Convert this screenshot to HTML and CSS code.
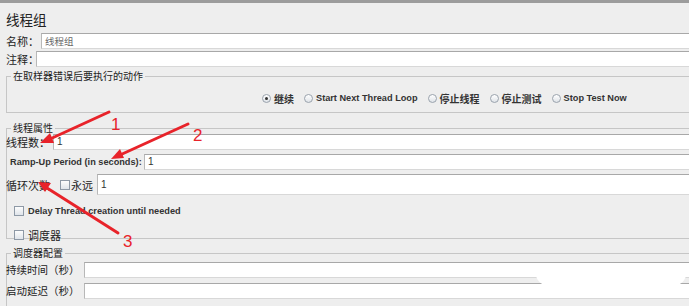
FILE: index.html
```
<!DOCTYPE html>
<html lang="zh-CN">
<head>
    <meta charset="UTF-8">
    <title>线程组</title>
    <link rel="stylesheet" href="styles.css">
</head>
<body>
    <div class="topbar"></div>

    <div class="page">
        <h1 class="title">线程组</h1>

        <div class="row row-name">
            <label class="lbl">名称：</label>
            <div class="field name-field">线程组</div>
        </div>
        <div class="row row-note">
            <label class="lbl">注释：</label>
            <div class="field"></div>
        </div>

        <fieldset class="group group-action">
            <legend>在取样器错误后要执行的动作</legend>
            <div class="radios">
                <span class="radio checked"></span><span class="opt cn">继续</span>
                <span class="radio"></span><span class="opt en">Start Next Thread Loop</span>
                <span class="radio"></span><span class="opt cn">停止线程</span>
                <span class="radio"></span><span class="opt cn">停止测试</span>
                <span class="radio"></span><span class="opt en">Stop Test Now</span>
            </div>
        </fieldset>

        <fieldset class="group group-thread">
            <legend>线程属性</legend>
            <div class="row row-count">
                <label class="lbl">线程数：</label>
                <div class="field">1</div>
            </div>
            <div class="row row-ramp">
                <label class="en">Ramp-Up Period (in seconds):</label>
                <div class="field">1</div>
            </div>
            <div class="row row-loop">
                <label class="lbl loop-lbl">循环次数</label>
                <span class="check"></span>
                <span class="forever">永远</span>
                <div class="field">1</div>
            </div>
            <div class="row row-check">
                <span class="check"></span>
                <span class="en">Delay Thread creation until needed</span>
            </div>
            <div class="row row-check row-sched">
                <span class="check"></span>
                <span class="lbl">调度器</span>
            </div>
        </fieldset>

        <fieldset class="group group-sched">
            <legend>调度器配置</legend>
            <div class="row row-dur">
                <label class="lbl">持续时间（秒）</label>
                <div class="field"></div>
            </div>
            <div class="row row-delay">
                <label class="lbl">启动延迟（秒）</label>
                <div class="field"></div>
            </div>
        </fieldset>
    </div>

    <!-- red annotation arrows over the form -->
    <svg class="marks" width="689" height="306" viewBox="0 0 689 306">
        <g stroke="#e8232a" stroke-width="3" stroke-linecap="round" fill="none">
            <line x1="109" y1="112" x2="50" y2="139"/>
            <line x1="188" y1="124" x2="120" y2="155"/>
            <line x1="118" y1="233" x2="47" y2="188"/>
        </g>
        <g fill="#e8232a">
            <polygon points="40,143 50,133 54,143"/>
            <polygon points="111,159 120,149 124,158"/>
            <polygon points="38,182 51,183 45,192"/>
        </g>
        <g class="nums" fill="#e8232a">
            <text x="111" y="130">1</text>
            <text x="193" y="141">2</text>
            <text x="123" y="247">3</text>
        </g>
    </svg>
    <div class="blot"></div>
</body>
</html>
```

FILE: styles.css
```
* {
    box-sizing: border-box;
}
body {
    margin: 0;
    width: 689px;
    height: 306px;
    overflow: hidden;
    background: #eeeeee;
    color: #222;
    font-family: 'Noto Sans CJK SC', 'Liberation Sans', sans-serif;
    font-size: 11px;
    position: relative;
}

.topbar { height: 3px; background: #9c9c9c; }

.page { padding: 0 0 0 6px; }

.title {
    margin: 6px 0 4px 0; font-size: 13.5px; font-weight: 400; line-height: 20px; color: #222;
}

.row { display: flex; align-items: center; height: 16px; margin-bottom: 2px; }
.lbl { white-space: nowrap; line-height: 16px; }
.en { font-family: 'Liberation Sans', sans-serif; font-size: 9.2px; font-weight: 700; color: #333; white-space: nowrap; }

.field {
    flex: 1; height: 16px; background: #fff;
    border-top: 1px solid #a8a8a8; border-left: 1px solid #b8b8b8; border-bottom: 1px solid #d8d8d8;
    font-family: 'Liberation Sans', sans-serif; font-size: 10px; line-height: 14px;
    padding-left: 3px; color: #333;
}
.name-field { font-family: 'Noto Sans CJK SC', sans-serif; font-size: 9.5px; color: #666; }
.row-name .lbl { width: 35px; }
.row-note .lbl { width: 30px; }

.group {
    margin: 0; border: 1px solid #c6c6c6; border-right: none;
    padding: 0;
}
.group legend { font-size: 10px; line-height: 12px; padding: 0 2px; margin-left: 4px; color: #222; }

.group-action { margin-top: 3px; height: 43px; }
.radios { display: flex; align-items: center; height: 28px; padding-left: 255px; padding-top: 4px; }
.radio {
    width: 9px; height: 9px; border-radius: 50%; border: 1px solid #9aa3ad;
    background: linear-gradient(#fff, #dfe3e8); position: relative; margin-right: 3px;
}
.radio.checked::after {
    content: ""; position: absolute; left: 2px; top: 2px; width: 3px; height: 3px;
    border-radius: 50%; background: #333;
}
.opt { margin-right: 10px; }
.opt.cn { font-size: 10px; font-weight: 700; color: #333; }

.group-thread { margin-top: 9px; height: 117px; }
.row-count { margin: 0 0 4px -1px; }
.row-count .lbl { width: 47px; }
.row-ramp { margin-bottom: 4px; }
.row-ramp .en { padding-left: 3px; width: 137px; }
.row-loop { height: 21px; margin-left: -1px; }
.row-loop .field { height: 21px; padding-top: 3px; }
.loop-lbl { width: 54px; }
.forever { width: 26px; margin-left: 1px; white-space: nowrap; }
.check {
    width: 10px; height: 10px; border: 1px solid #8e99a6;
    background: linear-gradient(#fdfdfd, #dfe4ea); display: inline-block; flex: none;
}
.row-check { height: 18px; margin: 7px 0 0 7px; }
.row-check .check { margin-right: 4px; }
.row-sched { margin-top: 6px; }

.group-sched { margin-top: 8px; height: 60px; }
.row-dur { margin: 3px 0 5px -1px; }
.row-dur .lbl, .row-delay .lbl { width: 78px; font-size: 10.5px; }
.row-delay { margin-left: -1px; }

.marks { position: absolute; left: 0; top: 0; pointer-events: none; }
.nums text { font-family: 'Liberation Sans', sans-serif; font-size: 17px; }

.blot {
    position: absolute; left: 536px; top: 263px; width: 150px; height: 22px;
    background: #fff; border-radius: 11px;
}
```
